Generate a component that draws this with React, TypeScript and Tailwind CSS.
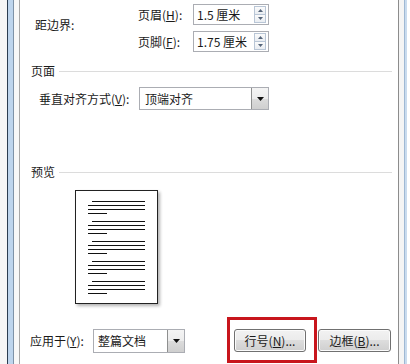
import React from "react";

const font = { fontFamily: '"Noto Sans CJK SC", "Noto Sans", sans-serif' };

// small black arrow used by the combo boxes
function DropButton() {
  return (
    <div className="flex h-full w-[17px] flex-none items-center justify-center border-l border-[#8e8f8f] bg-[linear-gradient(#f4f4f4,#ececec_50%,#dcdcdc_50%,#cfcfcf)]">
      <svg width="7" height="4" viewBox="0 0 7 4">
        <path d="M0 0h7L3.5 4z" fill="#111" />
      </svg>
    </div>
  );
}

function Spinner() {
  return (
    <div className="my-[1px] mr-[2px] flex w-[12px] flex-none flex-col">
      <div className="flex flex-1 items-center justify-center border border-[#b9c6d6] bg-[linear-gradient(#fbfbfb,#e9edf2)]">
        <svg width="5" height="3" viewBox="0 0 5 3">
          <path d="M0 3h5L2.5 0z" fill="#55657a" />
        </svg>
      </div>
      <div className="flex flex-1 items-center justify-center border border-t-0 border-[#b9c6d6] bg-[linear-gradient(#fbfbfb,#e9edf2)]">
        <svg width="5" height="3" viewBox="0 0 5 3">
          <path d="M0 0h5L2.5 3z" fill="#55657a" />
        </svg>
      </div>
    </div>
  );
}

function SpinBox({ label, keyChar, value }: { label: string; keyChar: string; value: string }) {
  return (
    <div className="flex h-[21px] items-center">
      <span className="w-[55px]">
        {label}(<span className="underline">{keyChar}</span>):
      </span>
      <div className="flex h-full w-[76px] items-stretch border border-[#abadb3] bg-white">
        <span className="flex flex-1 items-center pl-[3px]">{value}</span>
        <Spinner />
      </div>
    </div>
  );
}

function Separator({ title }: { title: string }) {
  return (
    <div className="flex h-[16px] items-center pl-[11px] pr-[6px]">
      <span>{title}</span>
      <div className="ml-[4px] h-px flex-1 bg-[#dcdcdc]" />
    </div>
  );
}

function Paragraph() {
  return (
    <div className="flex flex-col gap-[3px]">
      <div className="ml-[4px] h-px w-[53px] bg-[#111]" />
      <div className="h-px w-[57px] bg-[#111]" />
      <div className="h-px w-[57px] bg-[#111]" />
      <div className="h-px w-[19px] bg-[#111]" />
    </div>
  );
}

function Win7Button({ children }: { children: React.ReactNode }) {
  return (
    <div className="flex h-[23px] items-center justify-center rounded-[3px] border border-[#707070] bg-[linear-gradient(#f2f2f2,#ebebeb_50%,#dddddd_50%,#cfcfcf)] shadow-[inset_0_0_0_1px_#fbfbfb]">
      {children}
    </div>
  );
}

export default function App() {
  return (
    <div
      className="flex h-[364px] w-[410px] overflow-hidden bg-white text-[12px] leading-[16px] text-[#1a1a1a]"
      style={font}
    >
      {/* left window frame */}
      <div className="flex flex-none">
        <div className="w-[7px] bg-[#f6f6f6]" />
        <div className="w-px bg-[#2c3d50]" />
        <div className="w-[5px] bg-[#bed5ed]" />
        <div className="w-px bg-[#7f93a8]" />
        <div className="w-[5px] bg-[#f8f8f8]" />
        <div className="w-px bg-[#a8a8a8]" />
      </div>

      {/* dialog content */}
      <div className="flex w-[378px] flex-none flex-col pt-[4px]">
        <div className="flex items-center pl-[15px]">
          <span className="mb-[6px] w-[103px]">距边界:</span>
          <div className="flex flex-col gap-[6px]">
            <SpinBox label="页眉" keyChar="H" value="1.5 厘米" />
            <SpinBox label="页脚" keyChar="F" value="1.75 厘米" />
          </div>
        </div>

        <div className="mt-[11px]">
          <Separator title="页面" />
        </div>

        <div className="mt-[8px] flex h-[23px] items-center pl-[19px]">
          <span className="w-[100px]">
            垂直对齐方式(<span className="underline">V</span>):
          </span>
          <div className="flex h-full w-[130px] items-stretch border border-[#abadb3] bg-white">
            <span className="flex flex-1 items-center pl-[5px]">顶端对齐</span>
            <DropButton />
          </div>
        </div>

        <div className="mt-[54px]">
          <Separator title="预览" />
        </div>

        <div className="ml-[55px] mt-[10px] flex h-[114px] w-[83px] flex-col gap-[7px] border border-[#222] bg-white pl-[12px] pt-[10px] shadow-[2px_2px_3px_rgba(0,0,0,0.3)]">
          <Paragraph />
          <Paragraph />
          <Paragraph />
          <Paragraph />
          <Paragraph />
        </div>

        <div className="mt-[25px] flex h-[23px] items-center pl-[10px]">
          <span className="w-[63px]">
            应用于(<span className="underline">Y</span>):
          </span>
          <div className="flex h-[24px] w-[92px] items-stretch border border-[#abadb3] bg-white">
            <span className="flex flex-1 items-center pl-[4px]">整篇文档</span>
            <DropButton />
          </div>
          <div className="relative ml-[49px] w-[72px]">
            <Win7Button>
              行号(<span className="underline">N</span>)...
            </Win7Button>
            {/* red highlight annotation */}
            <div className="pointer-events-none absolute -bottom-[11px] -left-[7px] -right-[11px] -top-[12px] border-[3px] border-[#c8161d]" />
          </div>
          <div className="ml-[12px] w-[73px]">
            <Win7Button>
              边框(<span className="underline">B</span>)...
            </Win7Button>
          </div>
        </div>
      </div>

      {/* right window frame */}
      <div className="flex flex-none">
        <div className="w-px bg-[#8c8c8c]" />
        <div className="w-[5px] bg-[#f4f4f4]" />
        <div className="w-px bg-[#9fb8d3]" />
        <div className="w-[2px] bg-[#c9dbee]" />
        <div className="w-[3px] bg-white" />
      </div>
    </div>
  );
}
